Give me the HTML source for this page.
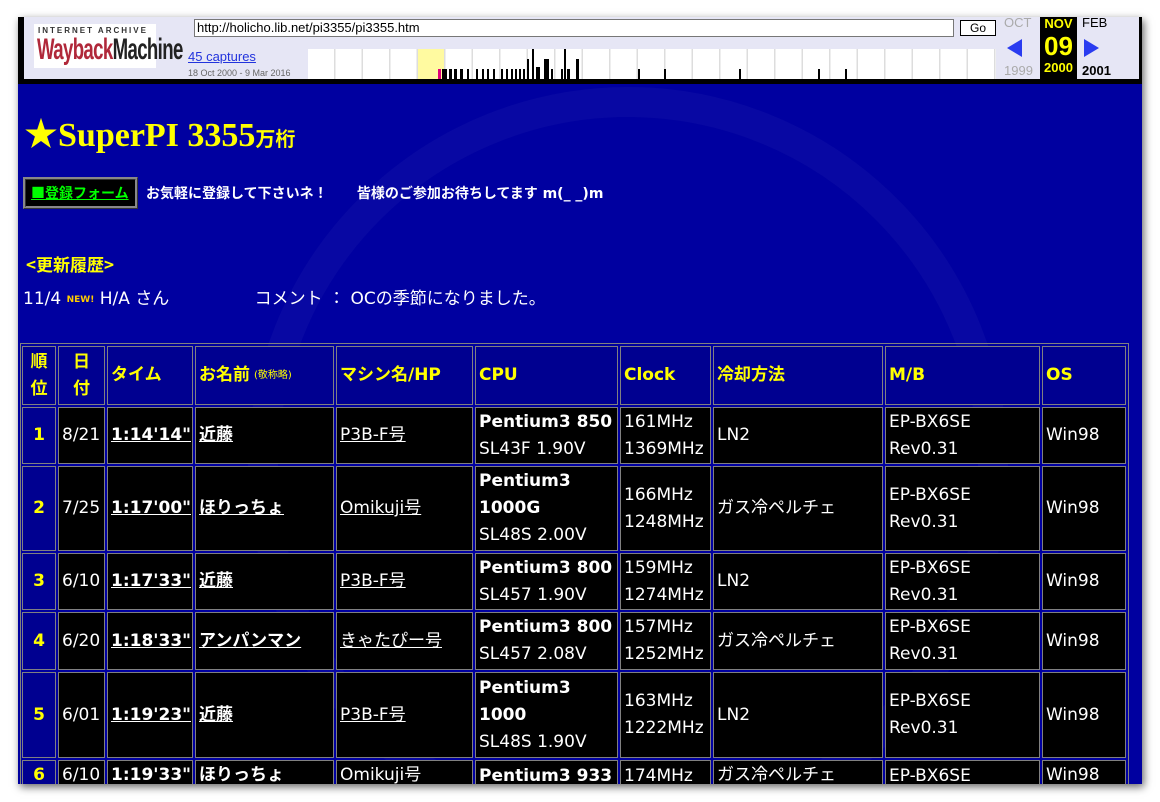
<!DOCTYPE html>
<html style="overflow:hidden;height:802px"><head><meta charset="utf-8"><style>
*{margin:0;padding:0;box-sizing:border-box}
body{width:1160px;height:802px;background:#fff;position:relative;overflow:hidden;font-family:"DejaVu Sans","Noto Sans CJK JP",sans-serif}
#frame{position:absolute;left:18px;top:17px;width:1124px;height:767px;background:#0000a0;overflow:hidden;box-shadow:2px 3px 8px rgba(0,0,0,.6)}
#tb{position:absolute;left:0;top:0;width:1124px;height:67px;background:#e6e6f5;border-left:6px solid #000;border-bottom:5px solid #000;border-right:3px solid #000;font-family:"Liberation Sans",sans-serif}
.a{position:absolute}
.c{position:absolute;border:1px solid #808080;display:flex;align-items:center;padding:0 3px;color:#fff;background:#000;font-size:17px;line-height:27px;overflow:hidden}
.h{background:#000090;color:#ff0;font-weight:bold}
.n{background:#000090;color:#ff0;font-weight:bold;justify-content:center}
u{text-decoration:underline}
b{font-weight:bold}
</style></head><body>
<div id="frame">
<div class="a" style="left:230px;top:70px;width:760px;height:760px;border-radius:50%;border:30px solid rgba(255,255,255,0.03)"></div>
<div id="tb">
 <div class="a" style="left:10px;top:7px;width:122px;height:44px;background:#fff"><div class="a" style="left:4px;top:2px;font-size:8px;letter-spacing:2px;color:#333;font-weight:bold">INTERNET ARCHIVE</div><div class="a" style="left:3px;top:10px;font-size:30px;font-weight:bold;letter-spacing:-1px;transform:scaleX(.62);transform-origin:left;white-space:nowrap;line-height:32px"><span style="color:#b0283a">Wayback</span><span style="color:#222">Machine</span></div></div>
 <div class="a" style="left:170px;top:2px;width:760px;height:18px;background:#fff;border:1px solid #777;font-size:13px;padding-left:2px;line-height:16px">http://holicho.lib.net/pi3355/pi3355.htm</div>
 <div class="a" style="left:936px;top:3px;width:36px;height:16px;background:#fff;border:1px solid #000;font-size:12px;text-align:center;line-height:14px">Go</div>
 <div class="a" style="left:164px;top:32px;font-size:13px;color:#2233dd;text-decoration:underline">45 captures</div>
 <div class="a" style="left:164px;top:51px;font-size:9px;color:#666">18 Oct 2000 - 9 Mar 2016</div>
 <div class="a" style="left:284px;top:32px;width:688px;height:30px;background:repeating-linear-gradient(90deg,#fff 0 26px,#ddd 26px 27.5px)"></div>
 <div class="a" style="left:394px;top:32px;width:26px;height:30px;background:#fffaa0"></div>
 <div class="a" style="left:414px;top:52px;width:3px;height:10px;background:#e0007a"></div>
 <svg class="a" style="left:284px;top:32px" width="700" height="30"><g fill="#000">
 <rect x="134" y="20" width="5" height="10"/><rect x="141" y="20" width="3" height="10"/><rect x="146" y="20" width="3" height="10"/><rect x="152" y="20" width="3" height="10"/><rect x="159" y="20" width="2" height="10"/><rect x="168" y="20" width="2" height="10"/><rect x="174" y="20" width="2" height="10"/><rect x="179" y="20" width="2" height="10"/><rect x="185" y="20" width="2" height="10"/><rect x="193" y="20" width="2" height="10"/><rect x="198" y="20" width="2" height="10"/><rect x="203" y="20" width="2" height="10"/><rect x="207" y="20" width="2" height="10"/><rect x="211" y="20" width="2" height="10"/><rect x="215" y="20" width="2" height="10"/><rect x="219" y="10" width="2" height="20"/><rect x="224" y="0" width="2" height="30"/><rect x="228" y="18" width="4" height="12"/><rect x="236" y="10" width="5" height="20"/><rect x="243" y="20" width="2" height="10"/><rect x="253" y="20" width="2" height="10"/><rect x="256" y="0" width="2" height="30"/><rect x="259" y="20" width="3" height="10"/><rect x="268" y="10" width="3" height="20"/><rect x="330" y="20" width="2" height="10"/><rect x="356" y="20" width="2" height="10"/><rect x="431" y="20" width="2" height="10"/><rect x="510" y="20" width="2" height="10"/><rect x="537" y="20" width="2" height="10"/></g></svg>
 <div class="a" style="left:980px;top:-2px;font-size:13px;color:#aaa">OCT</div>
 <div class="a" style="left:983px;top:22px;width:0;height:0;border-top:9px solid transparent;border-bottom:9px solid transparent;border-right:15px solid #2a3cf0"></div>
 <div class="a" style="left:980px;top:46px;font-size:13px;color:#aaa">1999</div>
 <div class="a" style="left:1016px;top:-6px;width:37px;height:68px;background:#000;color:#ff0;font-weight:bold;text-align:center"><div style="font-size:13px;line-height:17px;margin-top:4px">NOV</div><div style="font-size:26px;line-height:28px">09</div><div style="font-size:13px;line-height:16px">2000</div></div>
 <div class="a" style="left:1058px;top:-2px;font-size:13px">FEB</div>
 <div class="a" style="left:1060px;top:22px;width:0;height:0;border-top:9px solid transparent;border-bottom:9px solid transparent;border-left:15px solid #2a3cf0"></div>
 <div class="a" style="left:1058px;top:46px;font-size:13px;font-weight:bold">2001</div>
</div>
<div class="a" style="left:6px;top:90px;color:#ff0;font-family:'Liberation Serif','Noto Serif CJK SC',serif;font-weight:bold;font-size:34px;white-space:nowrap">★SuperPI 3355<span style="font-size:20px;font-family:'Noto Sans CJK JP',sans-serif">万桁</span></div>
<div class="a" style="left:5px;top:160px;width:115px;height:32px;background:#000;border:3px ridge #888;color:#0f0;font-weight:bold;font-size:14px;line-height:26px;padding-left:5px;text-decoration:underline;font-family:'Noto Sans CJK JP',sans-serif">■登録フォーム</div>
<div class="a" style="left:128px;top:166px;color:#fff;font-weight:bold;font-size:14px;white-space:nowrap;font-family:'DejaVu Sans','Noto Sans CJK JP',sans-serif">お気軽に登録して下さいネ！ &nbsp; &nbsp; &nbsp;皆様のご参加お待ちしてます m(_ _)m</div>
<div class="a" style="left:8px;top:234px;color:#ff0;font-weight:bold;font-size:17px;font-family:'Noto Sans CJK JP',sans-serif">&lt;更新履歴&gt;</div>
<div class="a" style="left:5px;top:267px;color:#fff;font-size:17px;white-space:nowrap;font-family:'DejaVu Sans','Noto Sans CJK JP',sans-serif">11/4 <span style="color:#fc0;font-size:9px;font-weight:bold;vertical-align:2px">NEW!</span> H/A さん <span style="display:inline-block;width:80px"></span>コメント ： OCの季節になりました。</div>

<div class="a" style="left:2px;top:326px;width:1109px;height:450px;border:1px solid #808080;border-bottom:none"></div>
<div class="c n" style="left:4px;top:329px;width:34px;height:59px;text-align:center">順<br>位</div>
<div class="c n" style="left:40px;top:329px;width:47px;height:59px;text-align:center">日<br>付</div>
<div class="c h" style="left:89px;top:329px;width:86px;height:59px">タイム</div>
<div class="c h" style="left:177px;top:329px;width:139px;height:59px">お名前<span style="font-size:10px;font-weight:normal;margin-left:4px">(敬称略)</span></div>
<div class="c h" style="left:318px;top:329px;width:137px;height:59px">マシン名/HP</div>
<div class="c h" style="left:457px;top:329px;width:143px;height:59px">CPU</div>
<div class="c h" style="left:602px;top:329px;width:91px;height:59px">Clock</div>
<div class="c h" style="left:695px;top:329px;width:170px;height:59px">冷却方法</div>
<div class="c h" style="left:867px;top:329px;width:155px;height:59px">M/B</div>
<div class="c h" style="left:1024px;top:329px;width:84px;height:59px">OS</div>
<div class="c n" style="left:4px;top:390px;width:34px;height:57px">1</div>
<div class="c" style="left:40px;top:390px;width:47px;height:57px">8/21</div>
<div class="c" style="left:89px;top:390px;width:86px;height:57px"><b><u>1:14'14"</u></b></div>
<div class="c" style="left:177px;top:390px;width:139px;height:57px"><b><u>近藤</u></b></div>
<div class="c" style="left:318px;top:390px;width:137px;height:57px"><u>P3B-F号</u></div>
<div class="c" style="left:457px;top:390px;width:143px;height:57px"><div><b>Pentium3 850</b><br>SL43F 1.90V</div></div>
<div class="c" style="left:602px;top:390px;width:91px;height:57px">161MHz<br>1369MHz</div>
<div class="c" style="left:695px;top:390px;width:170px;height:57px">LN2</div>
<div class="c" style="left:867px;top:390px;width:155px;height:57px">EP-BX6SE<br>Rev0.31</div>
<div class="c" style="left:1024px;top:390px;width:84px;height:57px">Win98</div>
<div class="c n" style="left:4px;top:449px;width:34px;height:85px">2</div>
<div class="c" style="left:40px;top:449px;width:47px;height:85px">7/25</div>
<div class="c" style="left:89px;top:449px;width:86px;height:85px"><b><u>1:17'00"</u></b></div>
<div class="c" style="left:177px;top:449px;width:139px;height:85px"><b><u>ほりっちょ</u></b></div>
<div class="c" style="left:318px;top:449px;width:137px;height:85px"><u>Omikuji号</u></div>
<div class="c" style="left:457px;top:449px;width:143px;height:85px"><div><b>Pentium3<br>1000G</b><br>SL48S 2.00V</div></div>
<div class="c" style="left:602px;top:449px;width:91px;height:85px">166MHz<br>1248MHz</div>
<div class="c" style="left:695px;top:449px;width:170px;height:85px">ガス冷ペルチェ</div>
<div class="c" style="left:867px;top:449px;width:155px;height:85px">EP-BX6SE<br>Rev0.31</div>
<div class="c" style="left:1024px;top:449px;width:84px;height:85px">Win98</div>
<div class="c n" style="left:4px;top:536px;width:34px;height:57px">3</div>
<div class="c" style="left:40px;top:536px;width:47px;height:57px">6/10</div>
<div class="c" style="left:89px;top:536px;width:86px;height:57px"><b><u>1:17'33"</u></b></div>
<div class="c" style="left:177px;top:536px;width:139px;height:57px"><b><u>近藤</u></b></div>
<div class="c" style="left:318px;top:536px;width:137px;height:57px"><u>P3B-F号</u></div>
<div class="c" style="left:457px;top:536px;width:143px;height:57px"><div><b>Pentium3 800</b><br>SL457 1.90V</div></div>
<div class="c" style="left:602px;top:536px;width:91px;height:57px">159MHz<br>1274MHz</div>
<div class="c" style="left:695px;top:536px;width:170px;height:57px">LN2</div>
<div class="c" style="left:867px;top:536px;width:155px;height:57px">EP-BX6SE<br>Rev0.31</div>
<div class="c" style="left:1024px;top:536px;width:84px;height:57px">Win98</div>
<div class="c n" style="left:4px;top:595px;width:34px;height:58px">4</div>
<div class="c" style="left:40px;top:595px;width:47px;height:58px">6/20</div>
<div class="c" style="left:89px;top:595px;width:86px;height:58px"><b><u>1:18'33"</u></b></div>
<div class="c" style="left:177px;top:595px;width:139px;height:58px"><b><u>アンパンマン</u></b></div>
<div class="c" style="left:318px;top:595px;width:137px;height:58px"><u>きゃたぴー号</u></div>
<div class="c" style="left:457px;top:595px;width:143px;height:58px"><div><b>Pentium3 800</b><br>SL457 2.08V</div></div>
<div class="c" style="left:602px;top:595px;width:91px;height:58px">157MHz<br>1252MHz</div>
<div class="c" style="left:695px;top:595px;width:170px;height:58px">ガス冷ペルチェ</div>
<div class="c" style="left:867px;top:595px;width:155px;height:58px">EP-BX6SE<br>Rev0.31</div>
<div class="c" style="left:1024px;top:595px;width:84px;height:58px">Win98</div>
<div class="c n" style="left:4px;top:655px;width:34px;height:86px">5</div>
<div class="c" style="left:40px;top:655px;width:47px;height:86px">6/01</div>
<div class="c" style="left:89px;top:655px;width:86px;height:86px"><b><u>1:19'23"</u></b></div>
<div class="c" style="left:177px;top:655px;width:139px;height:86px"><b><u>近藤</u></b></div>
<div class="c" style="left:318px;top:655px;width:137px;height:86px"><u>P3B-F号</u></div>
<div class="c" style="left:457px;top:655px;width:143px;height:86px"><div><b>Pentium3<br>1000</b><br>SL48S 1.90V</div></div>
<div class="c" style="left:602px;top:655px;width:91px;height:86px">163MHz<br>1222MHz</div>
<div class="c" style="left:695px;top:655px;width:170px;height:86px">LN2</div>
<div class="c" style="left:867px;top:655px;width:155px;height:86px">EP-BX6SE<br>Rev0.31</div>
<div class="c" style="left:1024px;top:655px;width:84px;height:86px">Win98</div>
<div class="c n" style="left:4px;top:743px;width:34px;height:30px;align-items:flex-end">6</div>
<div class="c" style="left:40px;top:743px;width:47px;height:30px;align-items:flex-end">6/10</div>
<div class="c" style="left:89px;top:743px;width:86px;height:30px;align-items:flex-end"><b>1:19'33"</b></div>
<div class="c" style="left:177px;top:743px;width:139px;height:30px;align-items:flex-end"><b>ほりっちょ</b></div>
<div class="c" style="left:318px;top:743px;width:137px;height:30px;align-items:flex-end">Omikuji号</div>
<div class="c" style="left:457px;top:743px;width:143px;height:30px;align-items:flex-start;padding-top:2px"><b>Pentium3 933</b></div>
<div class="c" style="left:602px;top:743px;width:91px;height:30px;align-items:flex-start;padding-top:2px">174MHz</div>
<div class="c" style="left:695px;top:743px;width:170px;height:30px;align-items:flex-end">ガス冷ペルチェ</div>
<div class="c" style="left:867px;top:743px;width:155px;height:30px;align-items:flex-start;padding-top:2px">EP-BX6SE</div>
<div class="c" style="left:1024px;top:743px;width:84px;height:30px;align-items:flex-end">Win98</div>
</div>
</body></html>
